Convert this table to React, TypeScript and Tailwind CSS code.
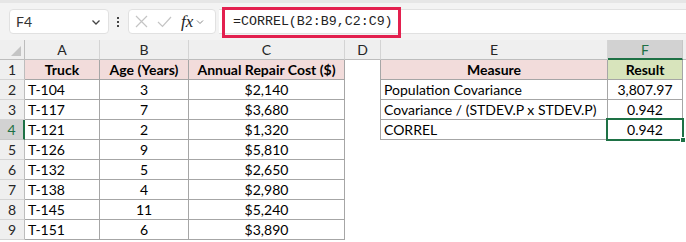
import React from "react";

const font = { fontFamily: "Lato, 'Noto Sans', sans-serif" };

const rows: [string, string, string][] = [
  ["T-104", "3", "$2,140"],
  ["T-117", "7", "$3,680"],
  ["T-121", "2", "$1,320"],
  ["T-126", "9", "$5,810"],
  ["T-132", "5", "$2,650"],
  ["T-138", "4", "$2,980"],
  ["T-145", "11", "$5,240"],
  ["T-151", "6", "$3,890"],
];

const measures: [string, string][] = [
  ["Population Covariance", "3,807.97"],
  ["Covariance / (STDEV.P x STDEV.P)", "0.942"],
  ["CORREL", "0.942"],
];

function ColHead({ label, active }: { label: string; active?: boolean }) {
  return (
    <div
      className={
        active
          ? "flex items-center justify-center bg-[#d2d2d2] border-r border-[#c6c6c6] border-b-2 border-b-[#1e7145] text-[#1e7145]"
          : "flex items-center justify-center bg-[#efefef] border-r border-[#d4d4d4] border-b border-b-[#bdbdbd] text-[#262626]"
      }
    >
      {label}
    </div>
  );
}

function RowHead({ n, active }: { n: number; active?: boolean }) {
  return (
    <div
      className={
        active
          ? "flex items-center justify-center bg-[#d2d2d2] border-r-2 border-r-[#1e7145] border-b border-b-[#c6c6c6] text-[#1e7145]"
          : "flex items-center justify-center bg-[#efefef] border-r border-r-[#bdbdbd] border-b border-b-[#d4d4d4] text-[#262626]"
      }
    >
      {n}
    </div>
  );
}

export default function App() {
  return (
    <div className="w-[686px] h-[242px] overflow-hidden bg-white text-[14px] text-black" style={font}>
      {/* formula bar */}
      <div className="h-[40px] bg-[#f3f3f3] border-t-[3px] border-[#e6e6e6] flex items-center">
        <div className="ml-[9px] w-[100px] h-[25px] bg-white rounded-[4px] border border-[#e1e1e1] flex items-center justify-between pl-[6px] pr-[6px]">
          <span className="text-[#333]">F4</span>
          <svg width="12" height="12" viewBox="0 0 12 12" fill="none" stroke="#444" strokeWidth="1.3">
            <path d="M2.5 4.5 L6 8 L9.5 4.5" />
          </svg>
        </div>
        <div className="ml-[7px] w-[4px] flex flex-col items-center gap-[2px]">
          <span className="w-[2px] h-[2px] bg-[#444]" />
          <span className="w-[2px] h-[2px] bg-[#444]" />
          <span className="w-[2px] h-[2px] bg-[#444]" />
        </div>
        <div className="ml-[8px] w-[88px] h-[25px] bg-white rounded-[4px] border border-[#e1e1e1] flex items-center pl-[6px] gap-[9px]">
          <svg width="13" height="13" viewBox="0 0 13 13" fill="none" stroke="#c4c4c4" strokeWidth="1.2">
            <path d="M1 1 L12 12 M12 1 L1 12" />
          </svg>
          <svg width="15" height="13" viewBox="0 0 15 13" fill="none" stroke="#c4c4c4" strokeWidth="1.2">
            <path d="M1 7 L5.5 11.5 L14 2" />
          </svg>
          <span className="flex items-center">
            <span className="italic text-[17px] text-[#222] leading-none" style={{ fontFamily: "'Liberation Serif', serif" }}>
              fx
            </span>
            <svg className="ml-[2px]" width="10" height="10" viewBox="0 0 10 10" fill="none" stroke="#888" strokeWidth="1">
              <path d="M2 3.5 L5 6.5 L8 3.5" />
            </svg>
          </span>
        </div>
        <div className="ml-[3px] flex-1 h-[25px] bg-white border-y border-[#e1e1e1] relative flex items-center">
          <div className="absolute left-[3px] top-[-3px] w-[179px] h-[31px] border-[3px] border-[#e3204f]" />
          <span
            className="pl-[14px] text-[13.3px] text-[#222]"
            style={{ fontFamily: "'Liberation Mono', monospace" }}
          >
            =CORREL(B2:B9,C2:C9)
          </span>
        </div>
      </div>

      {/* sheet */}
      <div className="grid grid-cols-[25px_75px_89px_156px_36px_227px_75px_3px] grid-rows-[20px_repeat(9,20px)]">
        <div className="bg-[#efefef] border-r border-b border-[#bdbdbd] relative">
          <svg className="absolute right-[3px] bottom-[3px]" width="10" height="10" viewBox="0 0 10 10">
            <path d="M10 0 L10 10 L0 10 Z" fill="#c4c4c4" />
          </svg>
        </div>
        <ColHead label="A" />
        <ColHead label="B" />
        <ColHead label="C" />
        <ColHead label="D" />
        <ColHead label="E" />
        <ColHead label="F" active />
        <div className="bg-[#efefef] border-b border-b-[#bdbdbd]" />

        {/* row 1 */}
        <RowHead n={1} />
        <div className="bg-[#f2dcdb] border-r border-b border-[#a6a6a6] font-bold flex items-center justify-center">Truck</div>
        <div className="bg-[#f2dcdb] border-r border-b border-[#a6a6a6] font-bold flex items-center justify-center">Age (Years)</div>
        <div className="bg-[#f2dcdb] border-r border-b border-[#a6a6a6] font-bold flex items-center justify-center">Annual Repair Cost ($)</div>
        <div className="border-r border-[#a6a6a6]" />
        <div className="bg-[#f2dcdb] border-r border-b border-[#a6a6a6] font-bold flex items-center justify-center">Measure</div>
        <div className="bg-[#d8e4bc] border-r border-b border-[#a6a6a6] font-bold flex items-center justify-center">Result</div>
        <div />

        {rows.map((r, i) => {
          const m = measures[i];
          const sel = i === 2;
          return (
            <React.Fragment key={r[0]}>
              <RowHead n={i + 2} active={sel} />
              <div className="border-r border-b border-[#a6a6a6] flex items-center pl-[3px]">{r[0]}</div>
              <div className="border-r border-b border-[#a6a6a6] flex items-center justify-center">{r[1]}</div>
              <div className="border-r border-b border-[#a6a6a6] flex items-center justify-center">{r[2]}</div>
              <div className={m ? "border-r border-[#a6a6a6]" : ""} />
              {m ? (
                <>
                  <div className="border-r border-b border-[#a6a6a6] flex items-center pl-[3px]">{m[0]}</div>
                  <div className="border-r border-b border-[#a6a6a6] flex items-center justify-center relative">
                    {m[1]}
                    {sel && (
                      <>
                        <div className="absolute left-[-2px] top-[-2px] right-[-2px] bottom-[-2px] border-2 border-[#1e7145]" />
                        <div className="absolute right-[-4px] bottom-[-4px] w-[6px] h-[6px] bg-[#1e7145] border border-white" />
                      </>
                    )}
                  </div>
                </>
              ) : (
                <>
                  <div />
                  <div />
                </>
              )}
              <div />
            </React.Fragment>
          );
        })}
      </div>
    </div>
  );
}
